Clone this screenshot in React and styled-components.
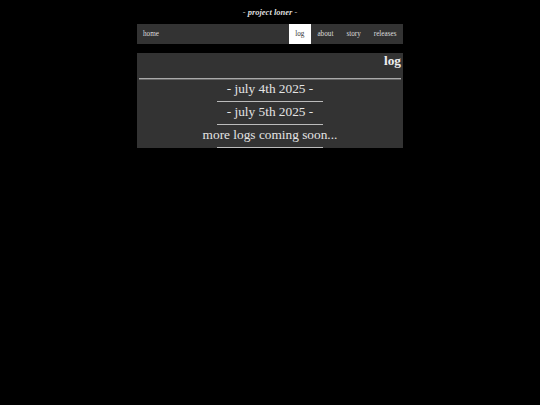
import React from "react";
import styled, { createGlobalStyle } from "styled-components";

const GlobalStyle = createGlobalStyle`
  body {
    margin: 0;
    background: #000;
    font-family: "Liberation Serif", "Times New Roman", serif;
    color: #ddd;
  }
`;

const Page = styled.div`
  width: 266px;
  margin: 0 auto;
  padding-top: 7px;
`;

const Title = styled.div`
  text-align: center;
  font-size: 8.5px;
  font-weight: bold;
  font-style: italic;
  line-height: 10px;
  color: #ddd;
  margin-bottom: 7px;
`;

const Nav = styled.nav`
  display: flex;
  align-items: stretch;
  height: 20px;
  background: #333;
  font-size: 7.2px;
`;

const Home = styled.a`
  display: flex;
  align-items: center;
  padding: 0 6px;
  color: #ddd;
  text-decoration: none;
  margin-right: auto;
`;

const NavLink = styled.a`
  display: flex;
  align-items: center;
  padding: 0 6.5px;
  color: ${(p) => (p.$active ? "#333" : "#ddd")};
  background: ${(p) => (p.$active ? "#fff" : "transparent")};
  text-decoration: none;
`;

const Panel = styled.section`
  margin-top: 9px;
  height: 95px;
  overflow: hidden;
  background: #333;
  padding: 0 2px;
  box-sizing: border-box;
`;

const Heading = styled.h2`
  margin: 0;
  text-align: right;
  font-size: 13.33px;
  font-weight: bold;
  line-height: 15px;
  color: #eee;
`;

const Rule = styled.div`
  height: 1px;
  background: #aaa;
  border-bottom: 1px solid #666;
  margin: 10px 0 1px;
`;

const Entry = styled.div`
  display: flex;
  flex-direction: column;
  align-items: center;
  margin-bottom: 2px;
`;

const EntryText = styled.div`
  font-size: 13.33px;
  line-height: 15px;
  color: #e4e4e4;
`;

const Underline = styled.div`
  width: 106px;
  height: 1px;
  background: #bbb;
  margin-top: 5px;
`;

const entries = ["- july 4th 2025 -", "- july 5th 2025 -", "more logs coming soon..."];

export default function App() {
  return (
    <>
      <GlobalStyle />
      <Page>
        <Title>- project loner -</Title>
        <Nav>
          <Home href="#">home</Home>
          <NavLink href="#" $active>log</NavLink>
          <NavLink href="#">about</NavLink>
          <NavLink href="#">story</NavLink>
          <NavLink href="#">releases</NavLink>
        </Nav>
        <Panel>
          <Heading>log</Heading>
          <Rule />
          {entries.map((e) => (
            <Entry key={e}>
              <EntryText>{e}</EntryText>
              <Underline />
            </Entry>
          ))}
        </Panel>
      </Page>
    </>
  );
}
